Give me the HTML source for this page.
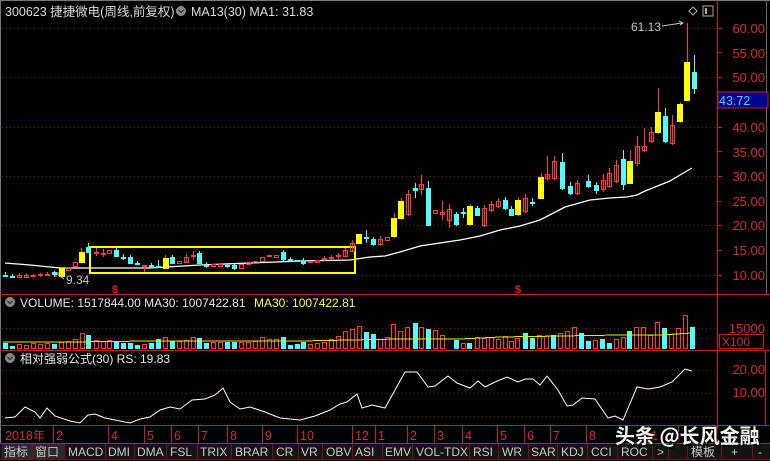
<!DOCTYPE html><html><head><meta charset="utf-8"><style>
body{margin:0;background:#000;width:770px;height:461px;overflow:hidden;font-family:"Liberation Sans","Noto Sans CJK SC",sans-serif}
svg{display:block}
.r{fill:none;stroke:#ff3c3c;stroke-width:1}
.c{fill:#54fcfc;stroke:#54fcfc}
.y{fill:#ffff00;stroke:#ffff00}
.lr{stroke:#ff3c3c}.lc{stroke:#54fcfc}.ly{stroke:#ffff00}
.ax{fill:#d03030;font-size:13px}
.tab{fill:#c8c8c8;font-size:12px}
</style></head><body>
<svg width="770" height="461" viewBox="0 0 770 461" xmlns="http://www.w3.org/2000/svg" shape-rendering="crispEdges">
<rect x="0" y="0" width="770" height="461" fill="#000"/>
<line x1="0" y1="0.5" x2="770" y2="0.5" stroke="#777"/>
<line x1="0.5" y1="0" x2="0.5" y2="443" stroke="#777"/>
<text x="5" y="16" fill="#dcdcdc" font-size="12.5">300623 捷捷微电(周线,前复权)</text>
<circle cx="181" cy="11" r="5" fill="#888"/><path d="M178.5 10l2.5 2.5 2.5-2.5" stroke="#222" fill="none" stroke-width="1.3"/>
<text x="191" y="16" fill="#dcdcdc" font-size="12.5">MA13(30)  MA1: 31.83</text>
<g stroke="#7a2020" stroke-dasharray="1,3">
<line x1="2" y1="28.5" x2="717" y2="28.5"/><line x1="2" y1="77.5" x2="717" y2="77.5"/><line x1="2" y1="127.5" x2="717" y2="127.5"/><line x1="2" y1="176.5" x2="717" y2="176.5"/><line x1="2" y1="225.5" x2="717" y2="225.5"/><line x1="2" y1="275.5" x2="717" y2="275.5"/>
<line x1="2" y1="328.5" x2="717" y2="328.5"/><line x1="2" y1="338.5" x2="717" y2="338.5"/>
<line x1="2" y1="370.5" x2="717" y2="370.5"/><line x1="2" y1="393.5" x2="717" y2="393.5"/><line x1="2" y1="416.5" x2="717" y2="416.5"/>
</g>
<g stroke="#c02020">
<line x1="717.5" y1="0" x2="717.5" y2="443"/>
<line x1="0" y1="294.5" x2="770" y2="294.5"/>
<line x1="0" y1="350.5" x2="770" y2="350.5"/>
<line x1="0" y1="425.5" x2="770" y2="425.5"/>
<line x1="0" y1="443.5" x2="770" y2="443.5"/>
<rect x="717.5" y="350.5" width="48" height="75" fill="none"/>
<rect x="719.5" y="334.5" width="44" height="14" fill="none"/>
</g>
<line x1="766.5" y1="0" x2="766.5" y2="294" stroke="#666"/>
<g class="ax" text-anchor="end">
<text x="765" y="33">60.00</text><text x="765" y="58">55.00</text><text x="765" y="82">50.00</text>
<text x="765" y="132">40.00</text><text x="765" y="157">35.00</text><text x="765" y="181">30.00</text><text x="765" y="206">25.00</text><text x="765" y="230">20.00</text><text x="765" y="255">15.00</text><text x="765" y="280">10.00</text>
<text x="765" y="333">15000</text><text x="765" y="374">20.00</text><text x="765" y="397">10.00</text>
</g>
<g stroke="#c02020"><line x1="717" y1="28.5" x2="722" y2="28.5"/><line x1="717" y1="52.5" x2="722" y2="52.5"/><line x1="717" y1="77.5" x2="722" y2="77.5"/><line x1="717" y1="102.5" x2="722" y2="102.5"/><line x1="717" y1="127.5" x2="722" y2="127.5"/><line x1="717" y1="151.5" x2="722" y2="151.5"/><line x1="717" y1="176.5" x2="722" y2="176.5"/><line x1="717" y1="201.5" x2="722" y2="201.5"/><line x1="717" y1="225.5" x2="722" y2="225.5"/><line x1="717" y1="250.5" x2="722" y2="250.5"/><line x1="717" y1="275.5" x2="722" y2="275.5"/></g>
<text x="722" y="346" fill="#d03030" font-size="12">X100</text>
<rect x="718" y="92" width="50" height="16" fill="#000090" stroke="#c02020"/>
<text x="719" y="105" fill="#54d0ff" font-size="12.5">43.72</text>
<path d="M689 11l4-4 4 4-4 4z" fill="none" stroke="#aaa"/>
<rect x="703" y="6" width="10" height="10" fill="none" stroke="#aaa"/><rect x="705" y="8" width="2" height="6" fill="#aaa"/>
<polyline fill="none" stroke="#fff" stroke-width="1.3" shape-rendering="auto" points="5,263 30,265 60,268 90,268 150,268 200,265 300,261 350,260 370,257 385,256 400,252 420,246 440,243 460,240 480,236 500,230 520,226 540,220 565,207 590,200 610,198 627,197 637,195 645,191 660,185 670,181 680,175 692,168"/>
<rect x="90" y="247" width="265" height="26" fill="none" stroke="#ffff00" stroke-width="2"/>
<g stroke-width="1">
<g class="lc"><line x1="5.5" y1="272" x2="5.5" y2="277"/><line x1="12.5" y1="274" x2="12.5" y2="278"/><line x1="54.5" y1="271" x2="54.5" y2="277"/><line x1="88.5" y1="243" x2="88.5" y2="253"/><line x1="116.5" y1="248" x2="116.5" y2="257"/><line x1="123.5" y1="254" x2="123.5" y2="260"/><line x1="130.5" y1="255" x2="130.5" y2="264"/><line x1="137.5" y1="261" x2="137.5" y2="265"/><line x1="151.5" y1="263" x2="151.5" y2="268"/><line x1="158.5" y1="260" x2="158.5" y2="268"/><line x1="172.5" y1="255" x2="172.5" y2="264"/><line x1="199.5" y1="251" x2="199.5" y2="264"/><line x1="206.5" y1="262" x2="206.5" y2="268"/><line x1="227.5" y1="263" x2="227.5" y2="268"/><line x1="234.5" y1="263" x2="234.5" y2="270"/><line x1="283.5" y1="250" x2="283.5" y2="261"/><line x1="290.5" y1="257" x2="290.5" y2="262"/><line x1="303.5" y1="258" x2="303.5" y2="265"/><line x1="366.5" y1="230" x2="366.5" y2="243"/><line x1="373.5" y1="237" x2="373.5" y2="246"/><line x1="415.5" y1="183" x2="415.5" y2="198"/><line x1="428.5" y1="181" x2="428.5" y2="226"/><line x1="456.5" y1="212" x2="456.5" y2="226"/><line x1="463.5" y1="208" x2="463.5" y2="218"/><line x1="477.5" y1="206" x2="477.5" y2="216"/><line x1="505.5" y1="197" x2="505.5" y2="210"/><line x1="511.5" y1="206" x2="511.5" y2="216"/><line x1="532.5" y1="198" x2="532.5" y2="206"/><line x1="562.5" y1="153" x2="562.5" y2="190"/><line x1="570.5" y1="182" x2="570.5" y2="195"/><line x1="588.5" y1="175" x2="588.5" y2="188"/><line x1="596.5" y1="182" x2="596.5" y2="194"/><line x1="623.5" y1="150" x2="623.5" y2="190"/><line x1="665.5" y1="108" x2="665.5" y2="143"/><line x1="694.5" y1="55" x2="694.5" y2="94"/></g>
<g class="lr"><line x1="19.5" y1="273" x2="19.5" y2="278"/><line x1="26.5" y1="273" x2="26.5" y2="278"/><line x1="33.5" y1="274" x2="33.5" y2="277"/><line x1="40.5" y1="273" x2="40.5" y2="277"/><line x1="47.5" y1="272" x2="47.5" y2="276"/><line x1="81.5" y1="248" x2="81.5" y2="263"/><line x1="96.5" y1="248" x2="96.5" y2="256"/><line x1="103.5" y1="249" x2="103.5" y2="257"/><line x1="144.5" y1="265" x2="144.5" y2="272"/><line x1="165.5" y1="255" x2="165.5" y2="269"/><line x1="186.5" y1="254" x2="186.5" y2="263"/><line x1="193.5" y1="251" x2="193.5" y2="260"/><line x1="324.5" y1="256" x2="324.5" y2="261"/><line x1="331.5" y1="255" x2="331.5" y2="260"/><line x1="338.5" y1="253" x2="338.5" y2="259"/><line x1="345.5" y1="248" x2="345.5" y2="257"/><line x1="352.5" y1="240" x2="352.5" y2="252"/><line x1="380.5" y1="236" x2="380.5" y2="246"/><line x1="394.5" y1="213" x2="394.5" y2="238"/><line x1="401.5" y1="198" x2="401.5" y2="220"/><line x1="408.5" y1="190" x2="408.5" y2="216"/><line x1="421.5" y1="175" x2="421.5" y2="195"/><line x1="442.5" y1="201" x2="442.5" y2="220"/><line x1="449.5" y1="204" x2="449.5" y2="228"/><line x1="470.5" y1="204" x2="470.5" y2="226"/><line x1="484.5" y1="205" x2="484.5" y2="227"/><line x1="491.5" y1="201" x2="491.5" y2="212"/><line x1="498.5" y1="198" x2="498.5" y2="208"/><line x1="518.5" y1="197" x2="518.5" y2="216"/><line x1="525.5" y1="194" x2="525.5" y2="213"/><line x1="541.5" y1="173" x2="541.5" y2="199"/><line x1="547.5" y1="156" x2="547.5" y2="180"/><line x1="554.5" y1="156" x2="554.5" y2="180"/><line x1="577.5" y1="180" x2="577.5" y2="195"/><line x1="603.5" y1="174" x2="603.5" y2="192"/><line x1="609.5" y1="168" x2="609.5" y2="188"/><line x1="616.5" y1="160" x2="616.5" y2="183"/><line x1="630.5" y1="150" x2="630.5" y2="184"/><line x1="637.5" y1="136" x2="637.5" y2="166"/><line x1="644.5" y1="128" x2="644.5" y2="152"/><line x1="651.5" y1="127" x2="651.5" y2="143"/><line x1="658.5" y1="88" x2="658.5" y2="134"/><line x1="672.5" y1="115" x2="672.5" y2="145"/><line x1="680.5" y1="102" x2="680.5" y2="123"/><line x1="687.5" y1="23" x2="687.5" y2="100"/></g>
<rect class="c" x="3.5" y="275.5" width="4" height="1"/><rect class="c" x="10.5" y="276.5" width="4" height="1"/>
<rect class="r" x="17.5" y="275.5" width="4" height="2"/><rect class="r" x="24.5" y="275.5" width="4" height="2"/><rect class="r" x="31.5" y="275.5" width="4" height="1"/><rect class="r" x="38.5" y="274.5" width="4" height="1"/><rect class="r" x="45.5" y="274.5" width="4" height="1"/>
<rect class="c" x="52.5" y="272.5" width="4" height="2"/>
<rect class="y" x="59.5" y="268.5" width="5" height="8"/>
<rect class="r" x="66.5" y="267.5" width="4" height="3"/><rect class="r" x="73.5" y="262.5" width="4" height="4"/>
<rect class="y" x="79.5" y="252.5" width="5" height="10"/>
<rect class="c" x="86.5" y="247.5" width="4" height="5"/>
<rect class="r" x="94.5" y="252.5" width="4" height="1"/><rect class="r" x="101.5" y="253.5" width="4" height="1"/><rect class="r" x="107.5" y="250.5" width="4" height="3"/>
<rect class="c" x="114.5" y="250.5" width="4" height="6"/><rect class="c" x="121.5" y="257.5" width="4" height="1"/><rect class="c" x="128.5" y="257.5" width="4" height="6"/><rect class="c" x="135.5" y="263.5" width="4" height="1"/>
<rect class="r" x="142.5" y="265.5" width="4" height="1"/><rect class="c" x="149.5" y="265.5" width="4" height="2"/><rect class="c" x="156.5" y="266.5" width="4" height="1"/>
<rect class="y" x="163.5" y="258.5" width="5" height="10"/><rect class="c" x="170.5" y="257.5" width="4" height="6"/>
<rect class="r" x="177.5" y="261.5" width="4" height="2"/><rect class="r" x="184.5" y="257.5" width="4" height="5"/><rect class="r" x="191.5" y="255.5" width="4" height="1"/>
<rect class="c" x="197.5" y="253.5" width="4" height="10"/><rect class="c" x="204.5" y="265.5" width="4" height="1"/>
<rect class="r" x="211.5" y="264.5" width="4" height="2"/><rect class="r" x="218.5" y="264.5" width="4" height="2"/><rect class="c" x="225.5" y="265.5" width="4" height="1"/><rect class="c" x="232.5" y="265.5" width="4" height="3"/>
<rect class="r" x="239.5" y="264.5" width="4" height="4"/><rect class="r" x="246.5" y="262.5" width="4" height="2"/><rect class="r" x="253.5" y="261.5" width="4" height="2"/><rect class="r" x="260.5" y="257.5" width="4" height="4"/><rect class="r" x="267.5" y="255.5" width="4" height="1"/><rect class="r" x="274.5" y="255.5" width="4" height="2"/>
<rect class="c" x="281.5" y="252.5" width="4" height="7"/><rect class="c" x="288.5" y="259.5" width="4" height="1"/><rect class="c" x="295.5" y="260.5" width="4" height="1"/><rect class="c" x="301.5" y="260.5" width="4" height="3"/>
<rect class="r" x="308.5" y="261.5" width="4" height="1"/><rect class="r" x="315.5" y="260.5" width="4" height="2"/><rect class="r" x="322.5" y="258.5" width="4" height="1"/><rect class="r" x="329.5" y="257.5" width="4" height="1"/><rect class="r" x="336.5" y="255.5" width="4" height="1"/><rect class="r" x="343.5" y="250.5" width="4" height="6"/><rect class="r" x="350.5" y="243.5" width="4" height="8"/>
<rect class="y" x="356.5" y="234.5" width="5" height="9"/><rect class="c" x="364.5" y="237.5" width="4" height="1"/><rect class="c" x="371.5" y="239.5" width="4" height="5"/><rect class="r" x="378.5" y="239.5" width="4" height="5"/><rect class="r" x="385.5" y="237.5" width="4" height="3"/>
<rect class="y" x="391.5" y="218.5" width="5" height="18"/><rect class="y" x="398.5" y="201.5" width="5" height="17"/><rect class="r" x="406.5" y="194.5" width="4" height="20"/>
<rect class="c" x="413.5" y="188.5" width="4" height="2"/><rect class="r" x="419.5" y="184.5" width="4" height="5"/><rect class="c" x="426.5" y="188.5" width="4" height="37"/>
<rect class="r" x="433.5" y="210.5" width="4" height="3"/><rect class="r" x="440.5" y="212.5" width="4" height="2"/><rect class="r" x="447.5" y="209.5" width="4" height="11"/>
<rect class="c" x="454.5" y="214.5" width="4" height="10"/><rect class="c" x="461.5" y="212.5" width="4" height="1"/><rect class="y" x="467.5" y="206.5" width="5" height="18"/><rect class="c" x="475.5" y="208.5" width="4" height="7"/>
<rect class="r" x="482.5" y="208.5" width="4" height="17"/><rect class="r" x="489.5" y="204.5" width="4" height="6"/><rect class="r" x="496.5" y="201.5" width="4" height="5"/>
<rect class="c" x="503.5" y="200.5" width="4" height="8"/><rect class="c" x="509.5" y="209.5" width="4" height="6"/><rect class="y" x="515.5" y="200.5" width="5" height="14"/><rect class="r" x="523.5" y="198.5" width="4" height="13"/><rect class="c" x="530.5" y="202.5" width="4" height="1"/>
<rect class="y" x="538.5" y="177.5" width="5" height="21"/><rect class="r" x="545.5" y="174.5" width="4" height="4"/><rect class="r" x="552.5" y="161.5" width="4" height="17"/>
<rect class="c" x="560.5" y="162.5" width="4" height="26"/><rect class="c" x="568.5" y="186.5" width="4" height="7"/><rect class="r" x="575.5" y="183.5" width="4" height="10"/>
<rect class="c" x="586.5" y="181.5" width="4" height="5"/><rect class="c" x="594.5" y="185.5" width="4" height="5"/><rect class="r" x="601.5" y="180.5" width="4" height="9"/><rect class="r" x="607.5" y="173.5" width="4" height="13"/><rect class="r" x="614.5" y="165.5" width="4" height="16"/>
<rect class="c" x="621.5" y="159.5" width="4" height="25"/><rect class="y" x="627.5" y="161.5" width="5" height="22"/><rect class="r" x="635.5" y="146.5" width="4" height="17"/><rect class="r" x="642.5" y="146.5" width="4" height="4"/><rect class="r" x="649.5" y="132.5" width="4" height="9"/>
<rect class="y" x="655.5" y="112.5" width="5" height="20"/><rect class="c" x="663.5" y="116.5" width="4" height="25"/><rect class="r" x="670.5" y="125.5" width="4" height="18"/>
<rect class="y" x="677.5" y="104.5" width="5" height="17"/><rect class="y" x="684.5" y="62.5" width="5" height="38"/><rect class="c" x="692.5" y="72.5" width="4" height="16"/>
</g>
<text x="631" y="31" fill="#c8c8c8" font-size="12">61.13</text>
<path d="M662 26 L682 23 M679 21 L683 23 L680 25" stroke="#c8c8c8" fill="none" shape-rendering="auto"/>
<text x="66" y="284" fill="#c8c8c8" font-size="12">9.34</text>
<path d="M64 279 L57 274 M56 277 L56 273 L60 273" stroke="#c8c8c8" fill="none" shape-rendering="auto"/>
<text x="115" y="293" fill="#e02020" font-size="11" font-weight="bold" text-anchor="middle">$</text>
<text x="518" y="293" fill="#e02020" font-size="11" font-weight="bold" text-anchor="middle">$</text>
<circle cx="10" cy="302" r="5" fill="#888"/><path d="M7.5 301l2.5 2.5 2.5-2.5" stroke="#222" fill="none" stroke-width="1.3"/>
<text x="20" y="307" fill="#e8e8e8" font-size="12">VOLUME: 1517844.00  MA30: 1007422.81</text>
<text x="254" y="307" fill="#ffff40" font-size="12">MA30: 1007422.81</text>
<g>
<rect class="c" x="3.5" y="343.5" width="4" height="5"/><rect class="c" x="10.5" y="346.5" width="4" height="2"/><rect class="r" x="17.5" y="344.5" width="4" height="4"/><rect class="r" x="24.5" y="345.5" width="4" height="3"/><rect class="r" x="31.5" y="343.5" width="4" height="5"/><rect class="r" x="38.5" y="344.5" width="4" height="4"/><rect class="r" x="45.5" y="343.5" width="4" height="5"/><rect class="c" x="52.5" y="344.5" width="4" height="4"/><rect class="r" x="59.5" y="342.5" width="4" height="6"/><rect class="r" x="66.5" y="341.5" width="4" height="7"/><rect class="r" x="73.5" y="339.5" width="4" height="9"/><rect class="r" x="80.5" y="333.5" width="4" height="15"/><rect class="c" x="86.5" y="335.5" width="4" height="13"/><rect class="r" x="94.5" y="340.5" width="4" height="8"/><rect class="r" x="101.5" y="341.5" width="4" height="7"/><rect class="r" x="107.5" y="340.5" width="4" height="8"/><rect class="c" x="114.5" y="342.5" width="4" height="6"/><rect class="c" x="121.5" y="343.5" width="4" height="5"/><rect class="c" x="128.5" y="343.5" width="4" height="5"/><rect class="c" x="135.5" y="345.5" width="4" height="3"/><rect class="r" x="142.5" y="344.5" width="4" height="4"/><rect class="c" x="149.5" y="343.5" width="4" height="5"/><rect class="c" x="156.5" y="339.5" width="4" height="9"/><rect class="r" x="163.5" y="337.5" width="4" height="11"/><rect class="c" x="170.5" y="341.5" width="4" height="7"/><rect class="r" x="177.5" y="341.5" width="4" height="7"/><rect class="r" x="184.5" y="340.5" width="4" height="8"/><rect class="r" x="191.5" y="337.5" width="4" height="11"/><rect class="c" x="197.5" y="338.5" width="4" height="10"/><rect class="c" x="204.5" y="343.5" width="4" height="5"/><rect class="r" x="211.5" y="342.5" width="4" height="6"/><rect class="r" x="218.5" y="342.5" width="4" height="6"/><rect class="c" x="225.5" y="342.5" width="4" height="6"/><rect class="c" x="232.5" y="342.5" width="4" height="6"/><rect class="r" x="239.5" y="342.5" width="4" height="6"/><rect class="r" x="246.5" y="342.5" width="4" height="6"/><rect class="r" x="253.5" y="341.5" width="4" height="7"/><rect class="r" x="260.5" y="337.5" width="4" height="11"/><rect class="r" x="267.5" y="339.5" width="4" height="9"/><rect class="r" x="274.5" y="339.5" width="4" height="9"/><rect class="c" x="281.5" y="337.5" width="4" height="11"/><rect class="c" x="288.5" y="345.5" width="4" height="3"/><rect class="c" x="295.5" y="344.5" width="4" height="4"/><rect class="c" x="301.5" y="342.5" width="4" height="6"/><rect class="r" x="308.5" y="344.5" width="4" height="4"/><rect class="r" x="315.5" y="343.5" width="4" height="5"/><rect class="r" x="322.5" y="342.5" width="4" height="6"/><rect class="r" x="329.5" y="339.5" width="4" height="9"/><rect class="r" x="336.5" y="336.5" width="4" height="12"/><rect class="r" x="343.5" y="331.5" width="4" height="17"/><rect class="r" x="350.5" y="329.5" width="4" height="19"/><rect class="r" x="357.5" y="326.5" width="4" height="22"/><rect class="c" x="364.5" y="332.5" width="4" height="16"/><rect class="c" x="371.5" y="334.5" width="4" height="14"/><rect class="r" x="378.5" y="339.5" width="4" height="9"/><rect class="r" x="385.5" y="337.5" width="4" height="11"/><rect class="r" x="391.5" y="324.5" width="4" height="24"/><rect class="r" x="398.5" y="331.5" width="4" height="17"/><rect class="r" x="405.5" y="327.5" width="4" height="21"/><rect class="c" x="413.5" y="323.5" width="4" height="25"/><rect class="r" x="419.5" y="327.5" width="4" height="21"/><rect class="c" x="426.5" y="329.5" width="4" height="19"/><rect class="r" x="433.5" y="330.5" width="4" height="18"/><rect class="r" x="440.5" y="335.5" width="4" height="13"/><rect class="c" x="454.5" y="340.5" width="4" height="8"/><rect class="r" x="461.5" y="343.5" width="4" height="5"/><rect class="c" x="467.5" y="343.5" width="4" height="5"/><rect class="r" x="475.5" y="337.5" width="4" height="11"/><rect class="r" x="482.5" y="338.5" width="4" height="10"/><rect class="r" x="489.5" y="337.5" width="4" height="11"/><rect class="r" x="496.5" y="339.5" width="4" height="9"/><rect class="r" x="503.5" y="336.5" width="4" height="12"/><rect class="r" x="509.5" y="341.5" width="4" height="7"/><rect class="r" x="515.5" y="338.5" width="4" height="10"/><rect class="c" x="523.5" y="333.5" width="4" height="15"/><rect class="c" x="530.5" y="338.5" width="4" height="10"/><rect class="r" x="537.5" y="335.5" width="4" height="13"/><rect class="r" x="544.5" y="336.5" width="4" height="12"/><rect class="c" x="551.5" y="335.5" width="4" height="13"/><rect class="r" x="558.5" y="333.5" width="4" height="15"/><rect class="r" x="565.5" y="331.5" width="4" height="17"/><rect class="r" x="572.5" y="327.5" width="4" height="21"/><rect class="c" x="579.5" y="333.5" width="4" height="15"/><rect class="c" x="586.5" y="341.5" width="4" height="7"/><rect class="r" x="593.5" y="340.5" width="4" height="8"/><rect class="c" x="600.5" y="339.5" width="4" height="9"/><rect class="c" x="607.5" y="343.5" width="4" height="5"/><rect class="r" x="614.5" y="339.5" width="4" height="9"/><rect class="r" x="621.5" y="337.5" width="4" height="11"/><rect class="c" x="627.5" y="331.5" width="4" height="17"/><rect class="r" x="634.5" y="327.5" width="4" height="21"/><rect class="r" x="641.5" y="327.5" width="4" height="21"/><rect class="r" x="648.5" y="335.5" width="4" height="13"/><rect class="r" x="655.5" y="322.5" width="4" height="26"/><rect class="c" x="662.5" y="328.5" width="4" height="20"/><rect class="r" x="669.5" y="334.5" width="4" height="14"/><rect class="r" x="676.5" y="328.5" width="4" height="20"/><rect class="r" x="683.5" y="315.5" width="4" height="33"/><rect class="c" x="690.5" y="327.5" width="4" height="21"/>
</g>
<polyline fill="none" stroke="#e8e800" points="3,342 70,342 150,341 200,341 300,341 350,340 400,339 460,339 500,337 560,336 620,335 660,335 692,333"/>
<circle cx="10" cy="358" r="5" fill="#888"/><path d="M7.5 357l2.5 2.5 2.5-2.5" stroke="#222" fill="none" stroke-width="1.3"/>
<text x="20" y="363" fill="#e8e8e8" font-size="12">相对强弱公式(30)  RS: 19.83</text>
<polyline fill="none" stroke="#fff" shape-rendering="auto" points="5,418 15,417 25,407 35,412 40,418 47,408 55,416 70,421 80,423 88,415 95,414 105,418 120,421 130,423 140,419 150,417 160,410 170,407 180,409 192,400 205,399 215,395 223,388 230,402 240,409 250,407 265,412 280,418 300,420 315,416 330,410 340,404 347,402 357,394 362,408 372,405 385,408 405,372 417,372 428,387 435,386 448,376 457,383 470,388 478,381 485,387 495,382 507,377 518,382 525,379 533,379 540,385 547,376 558,390 567,406 573,405 582,398 595,399 608,418 615,416 623,420 637,387 648,389 660,387 672,382 685,369 692,371"/>
<g stroke="#c02020">
<line x1="53.5" y1="426" x2="53.5" y2="443"/><line x1="108.5" y1="426" x2="108.5" y2="443"/><line x1="144.5" y1="426" x2="144.5" y2="443"/><line x1="171.5" y1="426" x2="171.5" y2="443"/><line x1="198.5" y1="426" x2="198.5" y2="443"/><line x1="227.5" y1="426" x2="227.5" y2="443"/><line x1="262.5" y1="426" x2="262.5" y2="443"/><line x1="297.5" y1="426" x2="297.5" y2="443"/><line x1="352.5" y1="426" x2="352.5" y2="443"/><line x1="375.5" y1="426" x2="375.5" y2="443"/><line x1="407.5" y1="426" x2="407.5" y2="443"/><line x1="434.5" y1="426" x2="434.5" y2="443"/><line x1="462.5" y1="426" x2="462.5" y2="443"/><line x1="497.5" y1="426" x2="497.5" y2="443"/><line x1="524.5" y1="426" x2="524.5" y2="443"/><line x1="550.5" y1="426" x2="550.5" y2="443"/><line x1="586.5" y1="426" x2="586.5" y2="443"/><line x1="648.5" y1="426" x2="648.5" y2="443"/><line x1="678.5" y1="426" x2="678.5" y2="443"/>
</g>
<g fill="#d03030" font-size="12.5">
<text x="5" y="440">2018年</text><text x="56" y="440">2</text><text x="111" y="440">4</text><text x="147" y="440">5</text><text x="174" y="440">6</text><text x="201" y="440">7</text><text x="230" y="440">8</text><text x="265" y="440">9</text><text x="300" y="440">10</text><text x="355" y="440">12</text><text x="378" y="440">1</text><text x="410" y="440">2</text><text x="437" y="440">3</text><text x="465" y="440">4</text><text x="500" y="440">5</text><text x="527" y="440">6</text><text x="553" y="440">7</text><text x="589" y="440">8</text><text x="651" y="440">1</text>
</g>
<rect x="0" y="444" width="770" height="15" fill="#141414"/>
<rect x="2" y="444" width="30" height="15" fill="#2a2a2a"/><rect x="33" y="444" width="31" height="15" fill="#2a2a2a"/>
<g stroke="#6a1818">
<line x1="32.5" y1="444" x2="32.5" y2="459"/><line x1="64.5" y1="444" x2="64.5" y2="459"/><line x1="105.5" y1="444" x2="105.5" y2="459"/><line x1="134.5" y1="444" x2="134.5" y2="459"/><line x1="166.5" y1="444" x2="166.5" y2="459"/><line x1="197.5" y1="444" x2="197.5" y2="459"/><line x1="231.5" y1="444" x2="231.5" y2="459"/><line x1="272.5" y1="444" x2="272.5" y2="459"/><line x1="298.5" y1="444" x2="298.5" y2="459"/><line x1="322.5" y1="444" x2="322.5" y2="459"/><line x1="352.5" y1="444" x2="352.5" y2="459"/><line x1="382.5" y1="444" x2="382.5" y2="459"/><line x1="412.5" y1="444" x2="412.5" y2="459"/><line x1="469.5" y1="444" x2="469.5" y2="459"/><line x1="498.5" y1="444" x2="498.5" y2="459"/><line x1="528.5" y1="444" x2="528.5" y2="459"/><line x1="557.5" y1="444" x2="557.5" y2="459"/><line x1="587.5" y1="444" x2="587.5" y2="459"/><line x1="617.5" y1="444" x2="617.5" y2="459"/><line x1="652.5" y1="444" x2="652.5" y2="459"/><line x1="668.5" y1="444" x2="668.5" y2="459"/><line x1="687.5" y1="444" x2="687.5" y2="459"/><line x1="721.5" y1="444" x2="721.5" y2="459"/><line x1="752.5" y1="444" x2="752.5" y2="459"/>
<line x1="0" y1="459.5" x2="770" y2="459.5"/>
</g>
<g class="tab">
<text x="4" y="456">指标</text><text x="35" y="456">窗口</text><text x="68" y="456">MACD</text><text x="108" y="456">DMI</text><text x="137" y="456">DMA</text><text x="170" y="456">FSL</text><text x="200" y="456">TRIX</text><text x="235" y="456">BRAR</text><text x="276" y="456">CR</text><text x="301" y="456">VR</text><text x="326" y="456">OBV</text><text x="355" y="456">ASI</text><text x="385" y="456">EMV</text><text x="416" y="456">VOL-TDX</text><text x="473" y="456">RSI</text><text x="502" y="456">WR</text><text x="531" y="456">SAR</text><text x="561" y="456">KDJ</text><text x="591" y="456">CCI</text><text x="621" y="456">ROC</text><text x="657" y="456">&gt;</text><text x="691" y="456">模板</text><text x="731" y="456">+</text><text x="758" y="456">-</text>
</g>
<text x="617" y="445" fill="#000" font-size="20" font-weight="bold" opacity="0.6" font-family="'Noto Sans CJK SC',sans-serif">头条 @长风金融</text>
<text x="615" y="443" fill="#f4f4f4" font-size="20" font-weight="bold" font-family="'Noto Sans CJK SC',sans-serif">头条 @长风金融</text>
</svg>
</body></html>
